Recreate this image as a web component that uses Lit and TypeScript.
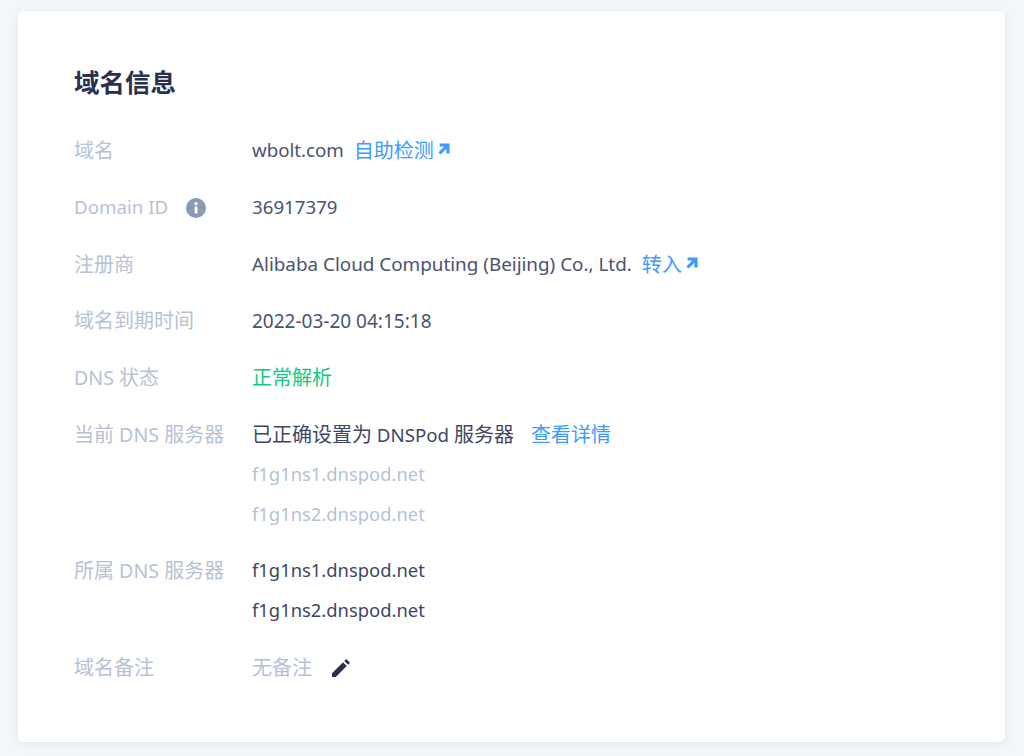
import { LitElement, html, css } from "lit";
import { customElement } from "lit/decorators.js";

const arrow = html`<svg class="arrow" viewBox="0 0 12 12" width="12" height="12"><path d="M1.6 0.4H11.6V10.4H8.4V5.8L2.6 11.6L0.4 9.4L6.2 3.6H1.6Z" fill="currentColor"/></svg>`;
const info = html`<svg class="info" viewBox="0 0 20 20" width="20" height="20"><circle cx="10" cy="10" r="10" fill="#8a9ab5"/><rect x="8.6" y="8.4" width="2.9" height="7" fill="#fff"/><circle cx="10" cy="5.6" r="1.7" fill="#fff"/></svg>`;
const pencil = html`<svg class="pencil" viewBox="0 0 20 20" width="20" height="20"><path d="M1 19V15.2L12 4.2L15.8 8L4.8 19Z M13.3 2.9L15.2 1L19 4.8L17.1 6.7Z" fill="#29304f"/></svg>`;

@customElement("app-root")
export class AppRoot extends LitElement {
  static styles = css`
    :host { display: block; width: 1024px; height: 756px; background: #f4f7fa; overflow: hidden; box-sizing: border-box; padding: 11px 19px 14px 18px;
      font-family: "Noto Sans", "Noto Sans CJK SC", sans-serif; font-size: 18.7px; color: #4a5270; }
    .card { background: #fff; border-radius: 6px; height: 731px; box-sizing: border-box; padding: 51px 56px 0; box-shadow: 0 2px 12px rgba(60, 80, 120, 0.1); }
    h1 { margin: 0 0 29px; font-size: 25.5px; line-height: 40px; font-weight: 700; color: #29304f; }
    .row { display: flex; margin-bottom: 16.8px; line-height: 40px; }
    .row.tight { margin-bottom: 15.8px; }
    .label { width: 178px; flex: none; color: #b6c2d4; display: flex; align-items: center; height: 40px; white-space: pre; }
    .label.mixed { font-size: 19.6px; }
    .value { display: flex; flex-direction: column; }
    .line { display: flex; align-items: center; height: 40px; white-space: pre; }
    .cjk { font-size: 20px; }
    .host { font-size: 18.4px; box-sizing: border-box; padding-bottom: 2px; }
    .date { font-size: 19px; }
    .long { font-size: 18.85px; }
    .up { transform: translateY(-1px); }
    a { color: #3d9bff; text-decoration: none; display: inline-flex; align-items: center; font-size: 20px; }
    .arrow { margin-left: 4px; margin-top: -4px; }
    .info { margin-left: 18px; }
    .pencil { margin-left: 19px; }
    .green { color: #0fcb7e; }
    .muted { color: #b6c2d4; }
    .dark { color: #3f4664; }
    .gap-s { margin-left: 10px; }
    .gap-m { margin-left: 10px; }
    .gap-l { margin-left: 17px; }
  `;
  render() {
    return html`<div class="card">
      <h1>域名信息</h1>
      <div class="row"><div class="label cjk">域名</div><div class="value"><div class="line"><span class="up">wbolt.com</span><a class="gap-s">自助检测${arrow}</a></div></div></div>
      <div class="row"><div class="label"><span class="up">Domain ID</span>${info}</div><div class="value"><div class="line"><span class="up">36917379</span></div></div></div>
      <div class="row"><div class="label cjk">注册商</div><div class="value"><div class="line"><span class="up long">Alibaba Cloud Computing (Beijing) Co., Ltd.</span><a class="gap-m">转入${arrow}</a></div></div></div>
      <div class="row"><div class="label cjk">域名到期时间</div><div class="value"><div class="line date">2022-03-20 04:15:18</div></div></div>
      <div class="row"><div class="label mixed">DNS <span class="cjk">状态</span></div><div class="value"><div class="line green cjk">正常解析</div></div></div>
      <div class="row tight"><div class="label mixed"><span class="cjk">当前</span> DNS <span class="cjk">服务器</span></div><div class="value"><div class="line dark"><span class="cjk">已正确设置为</span> DNSPod <span class="cjk">服务器</span><a class="gap-l">查看详情</a></div><div class="line muted host">f1g1ns1.dnspod.net</div><div class="line muted host">f1g1ns2.dnspod.net</div></div></div>
      <div class="row"><div class="label mixed"><span class="cjk">所属</span> DNS <span class="cjk">服务器</span></div><div class="value"><div class="line dark host">f1g1ns1.dnspod.net</div><div class="line dark host">f1g1ns2.dnspod.net</div></div></div>
      <div class="row"><div class="label cjk">域名备注</div><div class="value"><div class="line muted cjk">无备注${pencil}</div></div></div>
    </div>`;
  }
}
